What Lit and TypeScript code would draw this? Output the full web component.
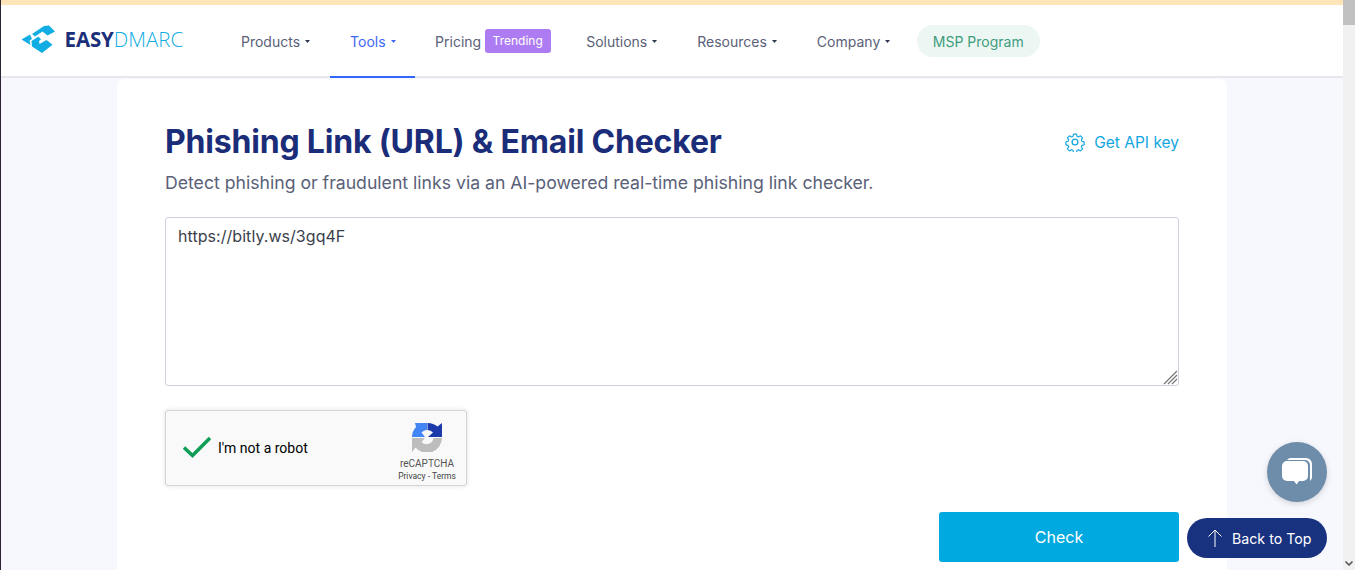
import { LitElement, html, css, svg } from "lit";
import { customElement } from "lit/decorators.js";

const NAV_LEFT = ["Products", "Tools"];
const NAV_RIGHT = ["Solutions", "Resources", "Company"];

const caret = svg`<svg class="caret" width="5" height="3" viewBox="0 0 5 3"><path d="M0 0h5L2.500 3z" fill="currentColor"/></svg>`;

@customElement("app-root")
export class AppRoot extends LitElement {
  static styles = css`
    * {
      box-sizing: border-box;
    }

    :host {
      display: flex;
      height: 570px;
      overflow: hidden;
      position: relative;
      font-family: Inter, "Liberation Sans", sans-serif;
      background: #f7f8fe;
      border-left: 1px solid #2b2333;
    }

    .page {
      flex: 1;
      min-width: 0;
      display: flex;
      flex-direction: column;
    }

    .banner {
      height: 5px;
      background: #fde5b7;
      flex: none;
    }

    header {
      height: 73px;
      flex: none;
      background: #fff;
      border-bottom: 2px solid #e6e6ee;
      display: flex;
      padding-left: 19px;
    }

    .logo {
      display: flex;
      align-items: center;
      width: 201px;
      margin-top: -3px;
    }

    .logo-text {
      margin-left: 9.5px;
      font-family: "Open Sans", sans-serif;
      font-size: 20.5px;
      font-weight: 300;
      letter-spacing: 0;
      color: #12ade3;
    }

    .logo-text b {
      color: #1c2f79;
      font-weight: 700;
      letter-spacing: -0.1px;
    }

    .nav-item {
      display: flex;
      align-items: center;
      gap: 5px;
      padding: 0 20px;
      font-size: 14px;
      color: #5a6178;
      margin-top: 1px;
    }

    .nav-item .caret {
      color: #30384f;
      margin-top: 1px;
    }

    .nav-item.active {
      color: #3f68f5;
      margin-bottom: -2px;
      padding-right: 19px;
      border-bottom: 2px solid #3366ff;
      margin-top: 0;
      padding-top: 1px;
    }

    .nav-item.active .caret {
      color: #3f68f5;
    }

    .nav-item.pricing {
      padding: 0 15.5px 0 20.5px;
      gap: 3px;
    }

    .trending {
      background: #ad7cf2;
      color: #fff;
      font-size: 12px;
      height: 24px;
      width: 66px;
      display: flex;
      align-items: center;
      justify-content: center;
      border-radius: 3px;
      margin-top: -1px;
    }

    .nav-item.pricing .label {
      margin-right: 0.5px;
    }

    .msp {
      align-self: center;
      margin-top: 1px;
      margin-left: 6.5px;
      height: 32px;
      width: 123px;
      border-radius: 16px;
      background: #ecf6f2;
      color: #3e9d7e;
      font-size: 14px;
      display: flex;
      align-items: center;
      justify-content: center;
    }

    main {
      flex: 1;
      min-height: 0;
      padding: 1px 116px 0 116px;
    }

    .card {
      background: #fff;
      border-radius: 8px;
      height: 560px;
      padding: 44px 48px;
    }

    .title-row {
      display: flex;
      align-items: center;
      justify-content: space-between;
    }

    h1 {
      margin: 0;
      font-size: 32px;
      line-height: 38px;
      font-weight: 700;
      color: #1b2d79;
      letter-spacing: -0.19px;
    }

    .api {
      display: flex;
      align-items: center;
      gap: 9px;
      color: #12a6e0;
      font-size: 15.5px;
    }

    .sub {
      margin: 10px 0 0;
      font-size: 17.65px;
      line-height: 24px;
      color: #5a6178;
    }

    .url {
      margin-top: 22px;
      height: 169px;
      border: 1px solid #cfd2de;
      border-radius: 3px;
      padding: 8px 12px;
      font-size: 16px;
      letter-spacing: 0.05px;
      line-height: 20px;
      color: #3a3f4b;
      position: relative;
    }

    .grip {
      position: absolute;
      right: 0;
      bottom: 0;
    }

    .captcha {
      margin-top: 24px;
      width: 302px;
      height: 76px;
      background: #f9f9f9;
      border: 1px solid #d3d3d3;
      border-radius: 3px;
      box-shadow: 0 0 4px 1px rgba(0, 0, 0, 0.08);
      display: flex;
      align-items: center;
      font-family: Roboto, "Liberation Sans", sans-serif;
    }

    .tick {
      margin-left: 17px;
      margin-top: -2px;
    }

    .robot {
      margin-left: 7px;
      font-size: 14px;
      color: #000;
      flex: 1;
    }

    .badge {
      width: 56px;
      margin-right: 11px;
      padding-top: 7px;
      display: flex;
      flex-direction: column;
      align-items: center;
      color: #555;
    }

    .badge .name {
      font-size: 10px;
      line-height: 12px;
      margin-top: 6px;
    }

    .badge .links {
      font-size: 8.5px;
      line-height: 10px;
      margin-top: 1px;
      white-space: nowrap;
      color: #444;
    }

    .actions {
      margin-top: 26px;
      display: flex;
      justify-content: flex-end;
    }

    .check {
      width: 240px;
      height: 50px;
      border: none;
      border-radius: 3px;
      background: #00a9e0;
      color: #fff;
      font: 16px Inter, "Liberation Sans", sans-serif;
    }

    .scrollbar {
      width: 12px;
      flex: none;
      background: #f1f1f1;
      display: flex;
      flex-direction: column;
      justify-content: space-between;
      align-items: center;
    }

    .thumb {
      width: 100%;
      height: 25px;
      background: #c1c1c1;
    }

    .arrow {
      margin-bottom: 4px;
    }

    .chat {
      position: absolute;
      left: 1266px;
      top: 442px;
      width: 60px;
      height: 60px;
      border-radius: 50%;
      background: #6e8dab;
      box-shadow: 0 2px 6px rgba(0, 0, 0, 0.15);
      display: flex;
      align-items: center;
      justify-content: center;
    }

    .top {
      position: absolute;
      left: 1186px;
      top: 518px;
      width: 140px;
      height: 40px;
      border-radius: 20px;
      background: #19327f;
      color: #fff;
      font-size: 14.2px;
      display: flex;
      align-items: center;
      gap: 10px;
      padding-left: 21px;
    }
  `;

  render() {
    return html`
      <div class="page">
        <div class="banner"></div>
        <header>
          <div class="logo">
            <svg width="35" height="30" viewBox="0 0 35 30">
              <path fill="#12ade3" d="M1.500 15.500 10 10.500 12 15 9.500 16.500 10.500 21Z"/>
              <path fill="#12ade3" d="M12 22.500 11.500 17 18.500 12.500 21 15.500 19 17 19.500 20 26.500 16 32.500 20.700 22 29Z"/>
              <path fill="#12ade3" d="M12 10 24 2 29 1.500 35 7.500 27.500 11.500 22.500 7.500 15 12.500Z"/>
            </svg>
            <span class="logo-text"><b>EASY</b>DMARC</span>
          </div>
          ${NAV_LEFT.map(
            (n) => html`<div class="nav-item ${n === "Tools" ? "active" : ""}">${n} ${caret}</div>`
          )}
          <div class="nav-item pricing"><span class="label">Pricing</span> <span class="trending">Trending</span></div>
          ${NAV_RIGHT.map((n) => html`<div class="nav-item">${n} ${caret}</div>`)}
          <div class="msp">MSP Program</div>
        </header>
        <main>
          <section class="card">
            <div class="title-row">
              <h1>Phishing Link (URL) &amp; Email Checker</h1>
              <div class="api">
                <svg width="20" height="20" viewBox="0 0 24 24" fill="none" stroke="#12a6e0" stroke-width="1.500" stroke-linejoin="round">
                  <circle cx="12" cy="12" r="3.500"/>
                  <path d="M10 1.500h4l.7 3.100 1.900.8 2.700-1.700 2.800 2.800-1.700 2.700.8 1.900 3 .7v4l-3 .7-.8 1.900 1.700 2.700-2.800 2.800-2.700-1.700-1.900.8-.7 3h-4l-.7-3-1.900-.8-2.700 1.700-2.800-2.800 1.700-2.700-.8-1.900-3-.7v-4l3-.7.8-1.900-1.700-2.700 2.800-2.800 2.700 1.700 1.900-.8z" transform="translate(1.200 1.200) scale(.9)"/>
                </svg>
                Get API key
              </div>
            </div>
            <p class="sub">Detect phishing or fraudulent links via an AI-powered real-time phishing link checker.</p>
            <div class="url">
              https://bitly.ws/3gq4F
              <svg class="grip" width="16" height="16" viewBox="0 0 16 16" stroke="#777" stroke-width="1.200">
                <path d="M2 15 15 2M6 15 15 6M10 15 15 10"/>
              </svg>
            </div>
            <div class="captcha">
              <svg class="tick" width="28" height="22" viewBox="0 0 28 22" fill="none" stroke="#0f9d58" stroke-width="3.500">
                <path d="M1 11.500 9.500 19.500 27 2"/>
              </svg>
              <span class="robot">I'm not a robot</span>
              <div class="badge">
                <svg width="30" height="30" viewBox="0 0 30 30">
                  <path fill="#bdbdbd" d="M30 16A15 15 0 0 1 3.500 25.500L0 30V16H13L9.500 20A7 7 0 0 0 21.500 16Z"/>
                  <path fill="#4285f4" d="M0 15A15 15 0 0 1 4 5L3 1H15V8A7 7 0 0 0 9.500 10.500L13 15H0Z"/>
                  <path fill="#1c3aa9" d="M15.500 1A15 15 0 0 1 25.500 4.500L30 1V15H16L21 10.500A7 7 0 0 0 15.500 8Z"/>
                </svg>
                <span class="name">reCAPTCHA</span>
                <span class="links">Privacy - Terms</span>
              </div>
            </div>
            <div class="actions">
              <button class="check">Check</button>
            </div>
          </section>
        </main>
      </div>
      <div class="scrollbar">
        <div class="thumb"></div>
        <svg class="arrow" width="8" height="5" viewBox="0 0 8 5" fill="none" stroke="#505050" stroke-width="1.500"><path d="M.5.500 4 4 7.500.5"/></svg>
      </div>
      <div class="chat">
        <svg width="32" height="30" viewBox="0 0 32 30">
          <path fill="#fff" d="M9 1h16a6 6 0 0 1 6 6v13a5 5 0 0 1-2 4V8a5 5 0 0 0-5-5H6a5 5 0 0 1 3-2z"/>
          <path fill="#fff" d="M6 4h16a5 5 0 0 1 5 5v10a5 5 0 0 1-5 5h-4l-2.500 3.500L13 24H6a5 5 0 0 1-5-5V9a5 5 0 0 1 5-5z"/>
        </svg>
      </div>
      <div class="top">
        <svg width="14" height="18" viewBox="0 0 14 18" fill="none" stroke="#fff" stroke-width="1"><path d="M7 18V1M.5 7.500 7 1l6.500 6.500"/></svg>
        Back to Top
      </div>
    `;
  }
}
